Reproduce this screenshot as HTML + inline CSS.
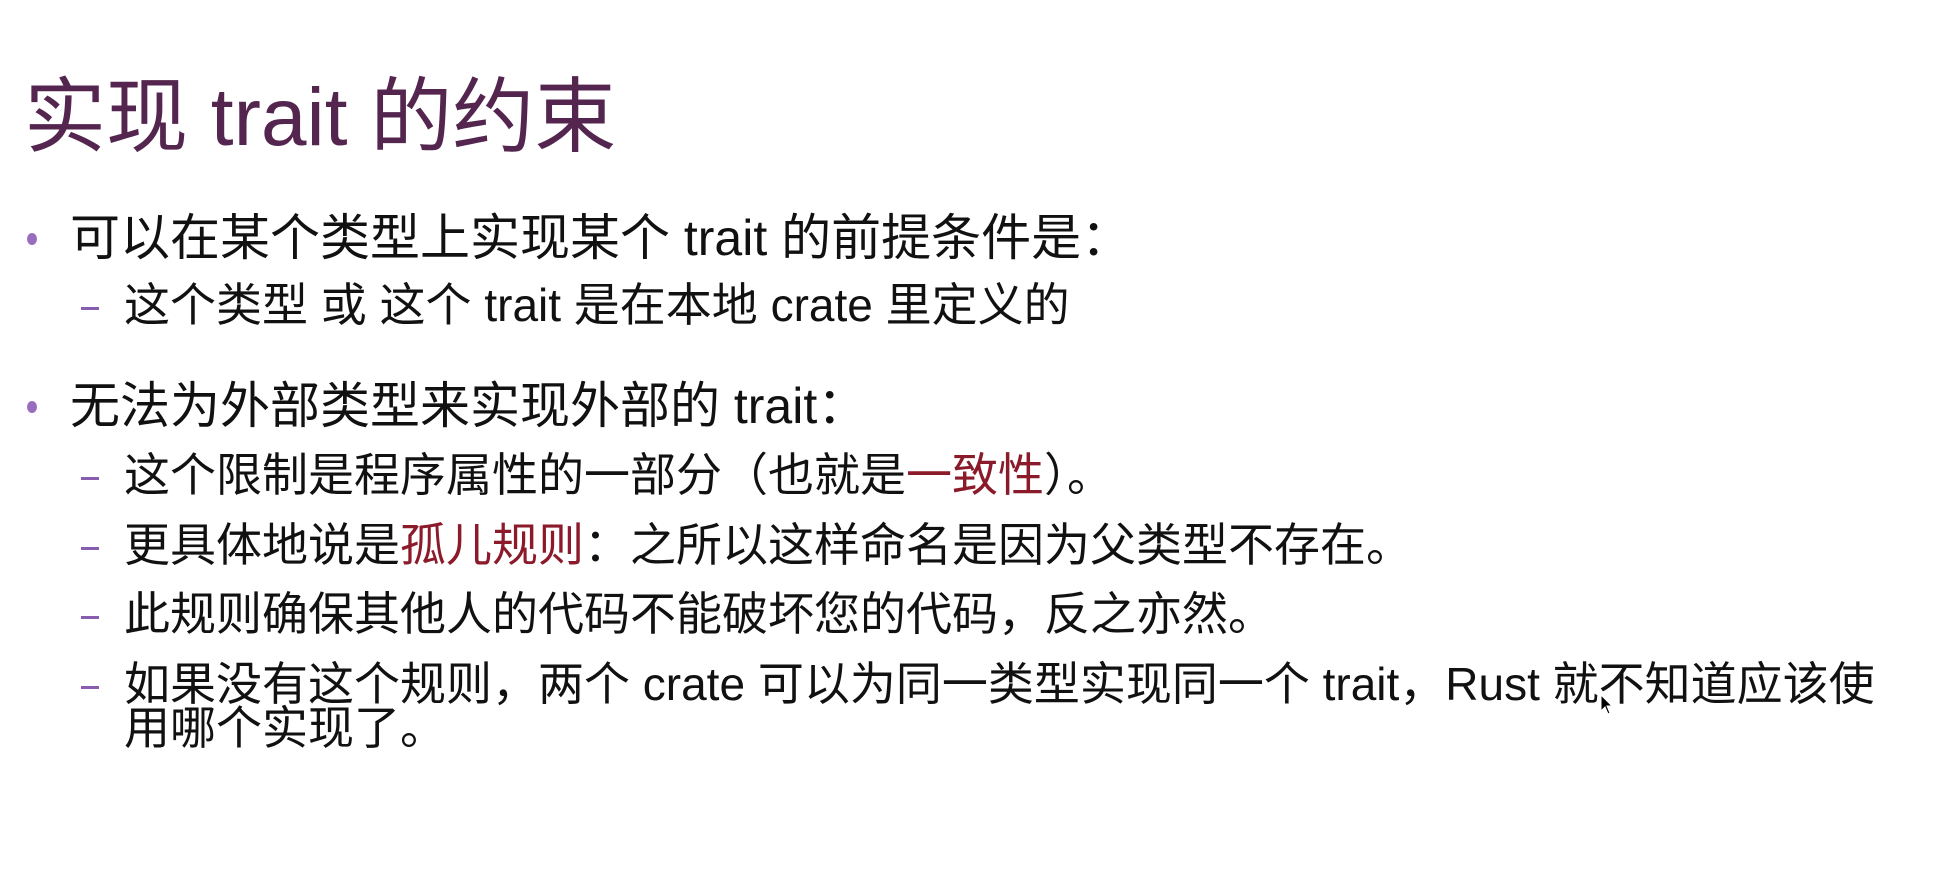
<!DOCTYPE html>
<html><head><meta charset="utf-8"><style>
html,body{margin:0;padding:0;background:#fff;width:1952px;height:892px;overflow:hidden}
body{position:relative;font-family:"Liberation Sans","Noto Sans CJK SC",sans-serif;color:#111}
.l{position:absolute;white-space:nowrap;line-height:60px;height:60px;font-size:46px}
.b{font-size:50px}
.t{position:absolute;left:24px;top:70px;font-size:82px;line-height:96px;color:#54264f;white-space:nowrap}
.dot{position:absolute;width:10px;height:12px;border-radius:50%;background:#9a6cc0}
.dash{position:absolute;width:18px;height:3px;background:#8a5cb0}
.r{color:#8b1a2a}
</style></head><body>
<div class="t">实现 trait 的约束</div>

<div class="dot" style="left:27px;top:233px"></div>
<div class="l b" style="left:70px;top:208px">可以在某个类型上实现某个 trait 的前提条件是：</div>

<div class="dash" style="left:81px;top:307px"></div>
<div class="l" style="left:124px;top:275px">这个类型 或 这个 trait 是在本地 crate 里定义的</div>

<div class="dot" style="left:27px;top:401px"></div>
<div class="l b" style="left:70px;top:376px">无法为外部类型来实现外部的 trait：</div>

<div class="dash" style="left:81px;top:477px"></div>
<div class="l" style="left:124px;top:445px">这个限制是程序属性的一部分（也就是<span class="r">一致性</span>）。</div>

<div class="dash" style="left:81px;top:547px"></div>
<div class="l" style="left:124px;top:515px">更具体地说是<span class="r">孤儿规则</span>：之所以这样命名是因为父类型不存在。</div>

<div class="dash" style="left:81px;top:616px"></div>
<div class="l" style="left:124px;top:584px">此规则确保其他人的代码不能破坏您的代码，反之亦然。</div>

<div class="dash" style="left:81px;top:686px"></div>
<div class="l" style="left:124px;top:654px">如果没有这个规则，两个 crate 可以为同一类型实现同一个 trait，Rust 就不知道应该使</div>
<div class="l" style="left:124px;top:698px">用哪个实现了。</div>

<svg style="position:absolute;left:1600px;top:694px" width="16" height="22" viewBox="0 0 16 22"><path d="M1 1 L1 17 L5 13 L8 20 L10 19 L7 12 L12 12 Z" fill="#000" stroke="#fff" stroke-width="1"/></svg>
</body></html>
